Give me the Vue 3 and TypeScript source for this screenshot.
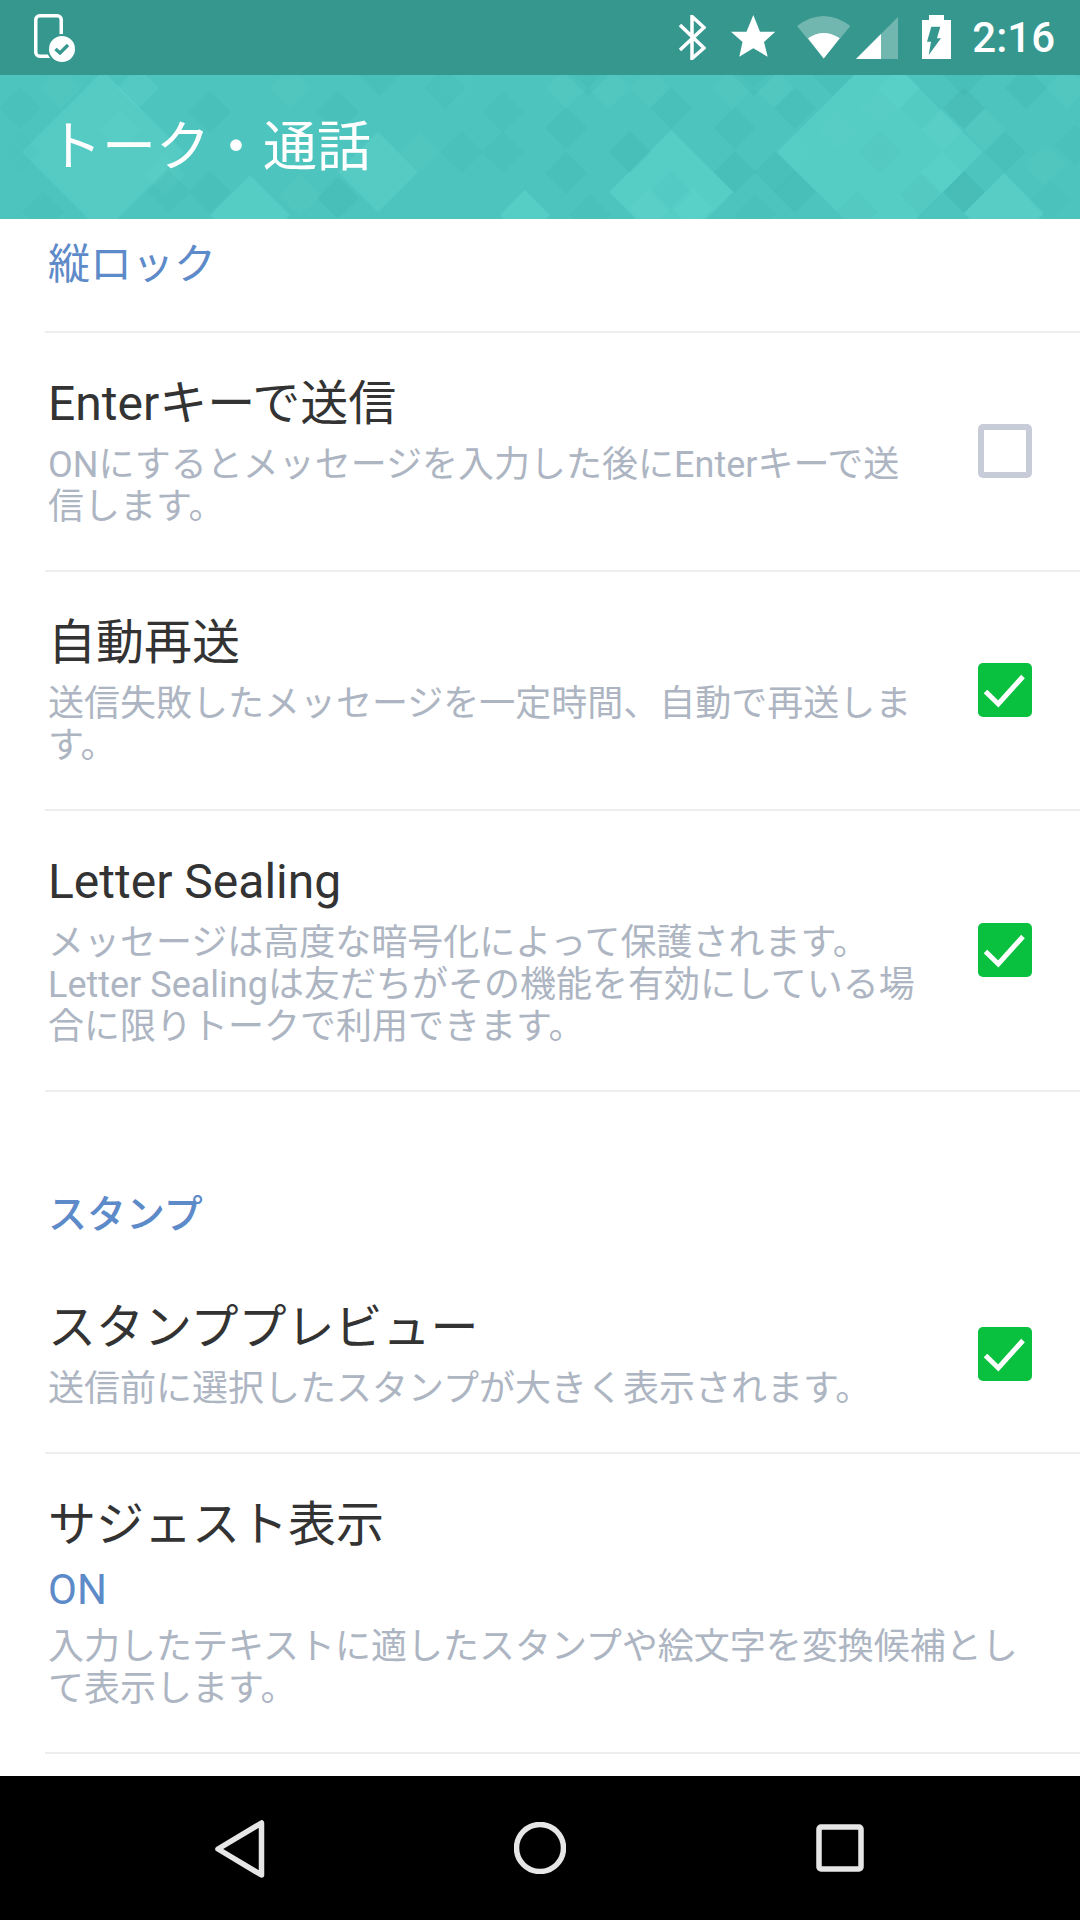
<script setup lang="ts">
interface Row { title: string; value?: string; sub: string; check?: boolean; cls: string }
const rowsA: Row[] = [
  { title: 'Enterキーで送信', sub: 'ONにするとメッセージを入力した後にEnterキーで送信します。', check: false, cls: 'r1' },
  { title: '自動再送', sub: '送信失敗したメッセージを一定時間、自動で再送します。', check: true, cls: 'r2' },
  { title: 'Letter Sealing', sub: 'メッセージは高度な暗号化によって保護されます。Letter Sealingは友だちがその機能を有効にしている場合に限りトークで利用できます。', check: true, cls: 'r3' },
]
const rowsB: Row[] = [
  { title: 'スタンププレビュー', sub: '送信前に選択したスタンプが大きく表示されます。', check: true, cls: 'r4' },
  { title: 'サジェスト表示', value: 'ON', sub: '入力したテキストに適したスタンプや絵文字を変換候補として表示します。', cls: 'r5' },
]
// [centre x, centre y, half-diagonal, opacity]; positive = light tile, negative = dark tile
const tiles: number[][] = [
  // large light diamonds
  [103, 77, 81, .4], [250, 140, 40, .45], [378, 97, 40, .4], [525, 140, 25, .5],
  [880, 77, 103, .45], [671, 117, 62, .5], [1004, 138, 40, .55],
  // small light tiles
  [138, 13, 21, .35], [566, 13, 21, .2], [609, 13, 21, .2], [650, 13, 21, .12], [733, 13, 21, .15], [774, 13, 21, .2],
  [899, 13, 21, .3], [942, 55, 21, .25], [985, 55, 21, .2], [942, 97, 21, .3], [1067, 13, 21, .2],
  [692, 133, 21, .3], [650, 133, 21, .25], [60, 13, 21, .15], [20, 77, 21, -.15],
  [165, 100, 21, .2], [120, 55, 21, .2], [838, 55, 21, .15], [795, 77, 21, .1], [880, 33, 21, .15],
  [290, 13, 21, .12], [420, 77, 21, .12], [462, 13, 21, .1], [1045, 90, 21, .15], [300, 120, 21, .12],
  // small dark tiles
  [210, 37, 21, -.5], [338, 37, 21, -.5], [462, 77, 21, -.4], [503, 37, 21, -.4], [503, 77, 21, -.4],
  [20, 33, 21, -.35], [379, 0, 21, -.5], [210, 117, 21, -.5], [169, 117, 21, -.35], [338, 123, 21, -.6], [43, 137, 21, -.4], [445, 13, 21, -.35],
  [671, 33, 21, -.5], [566, 53, 21, -.45], [630, 77, 21, -.6], [566, 98, 21, -.45], [735, 53, 21, -.5], [795, 33, 21, -.5],
  [735, 97, 21, -.6], [775, 97, 21, -.5], [795, 117, 21, -.6], [964, 33, 21, -.7], [964, 117, 21, -.8], [1005, 77, 21, -.5],
  [1026, 13, 21, -.6], [671, 117, 21, -.25], [880, 77, 21, -.2], [921, 120, 21, -.2], [857, 137, 21, -.2],
  [588, 0, 21, -.6], [754, 0, 21, -.6], [964, 0, 21, -.6], [833, 0, 21, -.5], [921, 33, 21, -.12],
  [1075, 70, 21, -.3], [1050, 125, 21, -.2], [590, 140, 21, -.3], [755, 140, 21, -.4],
]
function pts(t: number[]): string {
  const [x, y, r] = t
  return `${x},${y - r} ${x + r},${y} ${x},${y + r} ${x - r},${y}`
}
function tileOpacity(o: number): number {
  return o > 0 ? o * 0.6 : -o * 0.35
}
</script>

<template>
  <div class="phone">
    <div class="status">
      <svg class="notif" width="42" height="50" viewBox="0 0 42 50">
        <rect x="1.75" y="1.75" width="25.5" height="40.5" rx="4" fill="none" stroke="#fff" stroke-width="3.5" />
        <circle cx="28" cy="35" r="15" fill="#36978f" />
        <circle cx="28" cy="35" r="13" fill="#fff" />
        <path d="M21.5 35 L26 39 L34 31" fill="none" stroke="#36978f" stroke-width="3.4" />
      </svg>
      <div class="spacer"></div>
      <svg class="i-bt" width="27" height="45" viewBox="0 0 27 45">
        <path d="M1 10 L25 33 L13 43.5 V1.5 L25 12.5 L1 35" fill="none" stroke="#fff" stroke-width="3.5" />
      </svg>
      <svg class="i-star" width="45" height="42" viewBox="0 0 45 42">
        <polygon fill="#fff" points="22.3,0 29,16.7 44.3,16.7 33,27 36.7,41.7 22.3,33.3 8.3,41.7 11.5,27 0,16.7 15.5,16.7" />
      </svg>
      <svg class="i-wifi" width="54" height="44" viewBox="0 0 54 44">
        <path d="M26.7 43.5 L0 11 Q26.7 -9 53.3 11 Z" fill="#fff" fill-opacity=".3" />
        <path d="M26.7 43.5 L11 23.3 Q26.7 12.7 42.7 23.3 Z" fill="#fff" />
      </svg>
      <svg class="i-sig" width="42" height="42" viewBox="0 0 42 42">
        <polygon points="0,42 42,0 42,42" fill="#fff" fill-opacity=".3" />
        <polygon points="0,42 25,17 25,42" fill="#fff" />
      </svg>
      <svg class="i-bat" width="29" height="44" viewBox="0 0 29 44">
        <path fill="#fff" fill-rule="evenodd" d="M7 0 H22 V5 H29 V44 H0 V5 H7 Z M9.3 11.7 L5 26.7 H9 L6.7 40 L19 23.3 H15 L18.3 11.7 Z" />
      </svg>
      <span class="time">2:16</span>
    </div>

    <header class="bar">
      <svg class="pattern" width="1080" height="144" viewBox="0 0 1080 144" aria-hidden="true">
        <polygon v-for="(t, i) in tiles" :key="i" :points="pts(t)" :fill="t[3] > 0 ? '#6be0d8' : '#3aaea9'" :fill-opacity="tileOpacity(t[3])" />
      </svg>
      <h1 class="title">トーク・通話</h1>
    </header>

    <main class="content">
      <div class="cut">
        <div class="section first">縦ロック</div>
      </div>
      <div v-for="r in rowsA" :key="r.title" class="row" :class="r.cls">
        <div class="text">
          <div class="name">{{ r.title }}</div>
          <div class="sub">{{ r.sub }}</div>
        </div>
        <div class="box" :class="{ on: r.check }">
          <svg v-if="r.check" width="54" height="54" viewBox="0 0 54 54">
            <path d="M7.5 28.5 L20.3 41 L45 13.5" fill="none" stroke="#fff" stroke-width="5" />
          </svg>
        </div>
      </div>
      <div class="section second">スタンプ</div>
      <div v-for="r in rowsB" :key="r.title" class="row" :class="r.cls">
        <div class="text">
          <div class="name">{{ r.title }}</div>
          <div v-if="r.value" class="value">{{ r.value }}</div>
          <div class="sub">{{ r.sub }}</div>
        </div>
        <div v-if="r.check !== undefined" class="box" :class="{ on: r.check }">
          <svg width="54" height="54" viewBox="0 0 54 54">
            <path d="M7.5 28.5 L20.3 41 L45 13.5" fill="none" stroke="#fff" stroke-width="5" />
          </svg>
        </div>
      </div>
    </main>

    <nav class="nav">
      <svg width="50" height="58" viewBox="0 0 50 58">
        <path d="M46.5 3 V55 L3 29 Z" fill="none" stroke="#e6e6e6" stroke-width="5.5" stroke-linejoin="round" />
      </svg>
      <svg width="52" height="52" viewBox="0 0 52 52">
        <circle cx="26" cy="26" r="23.5" fill="none" stroke="#e6e6e6" stroke-width="5.5" />
      </svg>
      <svg width="48" height="48" viewBox="0 0 48 48">
        <rect x="3" y="3" width="42" height="42" rx="2" fill="none" stroke="#e6e6e6" stroke-width="5.5" />
      </svg>
    </nav>
  </div>
</template>

<style>
html, body { margin: 0; background: #fff; }
</style>

<style scoped>
.phone {
  width: 1080px;
  height: 1920px;
  display: flex;
  flex-direction: column;
  overflow: hidden;
  font-family: Roboto, "Noto Sans CJK JP", sans-serif;
  background: #fff;
}
.status {
  height: 75px;
  flex: none;
  background: #36978f;
  display: flex;
  align-items: flex-start;
  padding: 14px 25px 0 34px;
  box-sizing: border-box;
  color: #fff;
}
.spacer { flex: 1; }
.i-bt { margin-top: 1px; }
.i-star { margin: 1px 0 0 25px; }
.i-wifi { margin: 1px 0 0 21px; }
.i-sig { margin: 3px 0 0 5px; }
.i-bat { margin: 1px 0 0 24px; }
.time {
  margin-left: 21px;
  font-size: 42px;
  line-height: 48px;
  font-weight: 500;
}
.bar {
  position: relative;
  height: 144px;
  flex: none;
  background: #4ec4be;
  display: flex;
  align-items: center;
  padding: 0 0 9px 48px;
  box-sizing: border-box;
  overflow: hidden;
}
.pattern { position: absolute; left: 0; top: 0; }
.title {
  position: relative;
  margin: 0;
  font-size: 54px;
  font-weight: 400;
  color: #fff;
}
.content { flex: 1; overflow: hidden; }
.cut {
  height: 112px;
  border-bottom: 2px solid #eee;
  margin-left: 45px;
}
.section {
  color: #5d8ac8;
  font-size: 42px;
  line-height: 60px;
}
.section.first { margin-left: 3px; padding-top: 16px; }
.section.second { margin: 93px 0 13px 48px; font-size: 39px; font-weight: 500; }
.row {
  margin-left: 45px;
  padding: 0 48px 0 3px;
  box-sizing: border-box;
  border-bottom: 2px solid #eee;
  display: flex;
  align-items: center;
  gap: 55px;
}
.r1, .r2 { height: 239px; }
.r3 { height: 281px; }
.r4 { height: 196px; }
.r5 { height: 300px; }
.text { flex: 1; min-width: 0; margin-bottom: 4px; }
.name {
  font-size: 48px;
  line-height: 64px;
  color: #333;
}
.value {
  margin-top: 7px;
  font-size: 42px;
  line-height: 52px;
  color: #5d8ac8;
}
.sub {
  margin-top: 8px;
  font-size: 36px;
  line-height: 42px;
  color: #adb5c2;
}
.value + .sub { margin-top: 10px; }
.box {
  flex: none;
  width: 54px;
  height: 54px;
  margin-bottom: 2px;
  box-sizing: border-box;
  border: 6px solid #c8cbd8;
  border-radius: 5px;
}
.box.on {
  border: 0;
  background: #09c13f;
}
.nav {
  height: 144px;
  flex: none;
  background: #000;
  position: relative;
}
.nav svg { position: absolute; }
.nav svg:nth-child(1) { left: 215px; top: 44px; }
.nav svg:nth-child(2) { left: 514px; top: 46px; }
.nav svg:nth-child(3) { left: 816px; top: 48px; }
</style>
